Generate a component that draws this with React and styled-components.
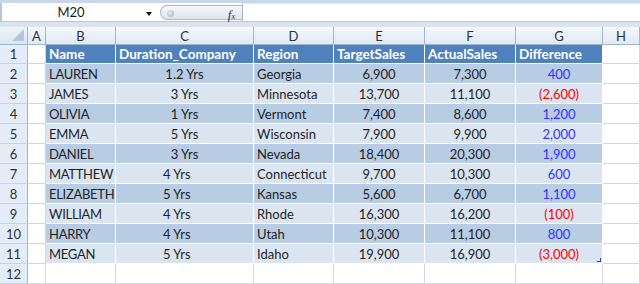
import React from 'react'
import styled, { createGlobalStyle } from 'styled-components'

const GlobalStyle = createGlobalStyle`
    html, body {
        margin:0;
        padding:0;
        background:#ffffff;
    }
    body {
        font-family:Lato, "Open Sans", sans-serif;
    }
`;

const columns = ['A', 'B', 'C', 'D', 'E', 'F', 'G', 'H'];

const header = ['Name', 'Duration_Company', 'Region', 'TargetSales', 'ActualSales', 'Difference'];

const rows = [
    ['LAUREN', '1.2 Yrs', 'Georgia', '6,900', '7,300', '400'],
    ['JAMES', '3 Yrs', 'Minnesota', '13,700', '11,100', '(2,600)'],
    ['OLIVIA', '1 Yrs', 'Vermont', '7,400', '8,600', '1,200'],
    ['EMMA', '5 Yrs', 'Wisconsin', '7,900', '9,900', '2,000'],
    ['DANIEL', '3 Yrs', 'Nevada', '18,400', '20,300', '1,900'],
    ['MATTHEW', '4 Yrs', 'Connecticut', '9,700', '10,300', '600'],
    ['ELIZABETH', '5 Yrs', 'Kansas', '5,600', '6,700', '1,100'],
    ['WILLIAM', '4 Yrs', 'Rhode', '16,300', '16,200', '(100)'],
    ['HARRY', '4 Yrs', 'Utah', '10,300', '11,100', '800'],
    ['MEGAN', '5 Yrs', 'Idaho', '19,900', '16,900', '(3,000)'],
];

const App = () => {
    return (
        <>
            <GlobalStyle />
            <Window>
                <TopStrip />
                <FormulaBar>
                    <NameBox>
                        <span>M20</span>
                        <DropArrow />
                    </NameBox>
                    <Pill>
                        <Knob />
                        <Fx>f<small>x</small></Fx>
                    </Pill>
                    <FormulaInput />
                </FormulaBar>
                <Gap />
                <Sheet>
                    <Corner><CornerTriangle /></Corner>
                    {columns.map(c => (
                        <ColHead key={c}>{c}</ColHead>
                    ))}

                    <RowHead>1</RowHead>
                    <Blank />
                    {header.map(h => (
                        <HeadCell key={h}>{h}</HeadCell>
                    ))}
                    <Blank />

                    {rows.map((r, i) => {
                        const band = i % 2 === 0 ? 'dark' : 'light';
                        const negative = r[5].startsWith('(');
                        return (
                            <React.Fragment key={r[0]}>
                                <RowHead>{i + 2}</RowHead>
                                <Blank />
                                <Cell band={band} narrow>{r[0]}</Cell>
                                <Cell band={band} align={i < 5 ? 'center' : 'left'} indent={i < 5 ? 0 : 47}>{r[1]}</Cell>
                                <Cell band={band}>{r[2]}</Cell>
                                <Cell band={band} align="center">{r[3]}</Cell>
                                <Cell band={band} align="center">{r[4]}</Cell>
                                <Cell band={band} align="center" tone={negative ? 'red' : 'blue'}>
                                    {r[5]}
                                    {i === rows.length - 1 && <ResizeHandle />}
                                </Cell>
                                <Blank />
                            </React.Fragment>
                        )
                    })}

                    <RowHead>12</RowHead>
                    {columns.map(c => (
                        <Blank key={c} />
                    ))}
                </Sheet>
            </Window>
        </>
    )
}

const Window = styled.div`
    width:640px;
    height:284px;
    overflow:hidden;
    display:flex;
    flex-direction:column;
    background:#ffffff;
`;

const TopStrip = styled.div`
    height:3px;
    background:#c9d7ea;
`;

const FormulaBar = styled.div`
    height:20px;
    display:flex;
    align-items:stretch;
    background:#ffffff;
    border-left:2px solid #b6c6dc;
`;

const NameBox = styled.div`
    width:150px;
    position:relative;
    display:flex;
    align-items:center;
    justify-content:center;
    padding-right:12px;
    box-sizing:border-box;
    font-size:13px;
    color:#1a1a1a;
`;

const DropArrow = styled.div`
    position:absolute;
    right:0;
    top:9px;
    width:0;
    height:0;
    border-left:3px solid transparent;
    border-right:3px solid transparent;
    border-top:4px solid #111111;
`;

const Pill = styled.div`
    margin:2px 0 1px 8px;
    width:82px;
    position:relative;
    box-sizing:border-box;
    border:1px solid #a9b8cc;
    border-right:none;
    border-radius:9px 0 0 9px;
    background:linear-gradient(#f7f9fc, #dde4ee);
`;

const Knob = styled.div`
    position:absolute;
    left:6px;
    top:4px;
    width:7px;
    height:7px;
    border-radius:50%;
    background:radial-gradient(circle at 40% 40%, #e8ebef, #a9b0ba);
`;

const Fx = styled.div`
    position:absolute;
    right:7px;
    top:0;
    height:17px;
    display:flex;
    align-items:center;
    font-family:"Liberation Serif", serif;
    font-style:italic;
    font-size:13px;
    line-height:1;
    color:#333333;
    small{
        font-size:8px;
        margin-top:5px;
    }
`;

const FormulaInput = styled.div`
    flex:1;
    border-left:1px solid #a9b8cc;
    border-top:1px solid #e3e8ef;
`;

const Gap = styled.div`
    height:5px;
    background:#dbe3ee;
    border-top:1px solid #b9c7da;
`;

const Sheet = styled.div`
    display:grid;
    grid-template-columns:28px 18px 70px 138px 80px 91px 91px 87px 37px;
    grid-template-rows:18px 19px repeat(10, 20px) 20px;
    font-size:13px;
`;

const Corner = styled.div`
    position:relative;
    background:linear-gradient(#eef3fa, #dbe5f2);
    border-right:1px solid #9eb6ce;
    border-bottom:1px solid #9eb6ce;
`;

const CornerTriangle = styled.div`
    position:absolute;
    right:3px;
    bottom:3px;
    width:0;
    height:0;
    border-left:12px solid transparent;
    border-bottom:12px solid #b4c5da;
`;

const ColHead = styled.div`
    display:flex;
    align-items:center;
    justify-content:center;
    background:linear-gradient(#f5f8fc, #e1e9f4);
    border-right:1px solid #9eb6ce;
    border-bottom:1px solid #9eb6ce;
    color:#27323f;
    font-size:13px;
`;

const RowHead = styled.div`
    display:flex;
    align-items:center;
    justify-content:center;
    background:#e4ecf7;
    border-right:1px solid #9eb6ce;
    border-bottom:1px solid #c5d3e6;
    color:#27323f;
    font-size:13px;
`;

const Blank = styled.div`
    background:#ffffff;
    border-right:1px solid #d0d7e5;
    border-bottom:1px solid #d0d7e5;
`;

const HeadCell = styled.div`
    display:flex;
    align-items:center;
    padding-left:3px;
    background:#4f81bd;
    border-right:1px solid #ffffff;
    border-bottom:1px solid #ffffff;
    color:#ffffff;
    font-size:13.5px;
    font-weight:700;
    white-space:nowrap;
    overflow:hidden;
`;

const Cell = styled.div`
    position:relative;
    display:flex;
    align-items:center;
    justify-content:${p => p.align === 'center' ? 'center' : 'flex-start'};
    padding-left:${p => p.align === 'center' ? 0 : (p.indent || 3)}px;
    background:${p => p.band === 'dark' ? '#b8cce4' : '#dbe5f1'};
    border-right:1px solid #ffffff;
    border-bottom:1px solid #ffffff;
    color:${p => p.tone === 'red' ? '#ff0000' : p.tone === 'blue' ? '#3333ff' : '#1f1f1f'};
    letter-spacing:${p => p.narrow ? '-0.3px' : 'normal'};
    white-space:nowrap;
    overflow:hidden;
`;

const ResizeHandle = styled.div`
    position:absolute;
    right:1px;
    bottom:1px;
    width:3px;
    height:3px;
    border-right:1px solid #1f4e9a;
    border-bottom:1px solid #1f4e9a;
`;

export default App
